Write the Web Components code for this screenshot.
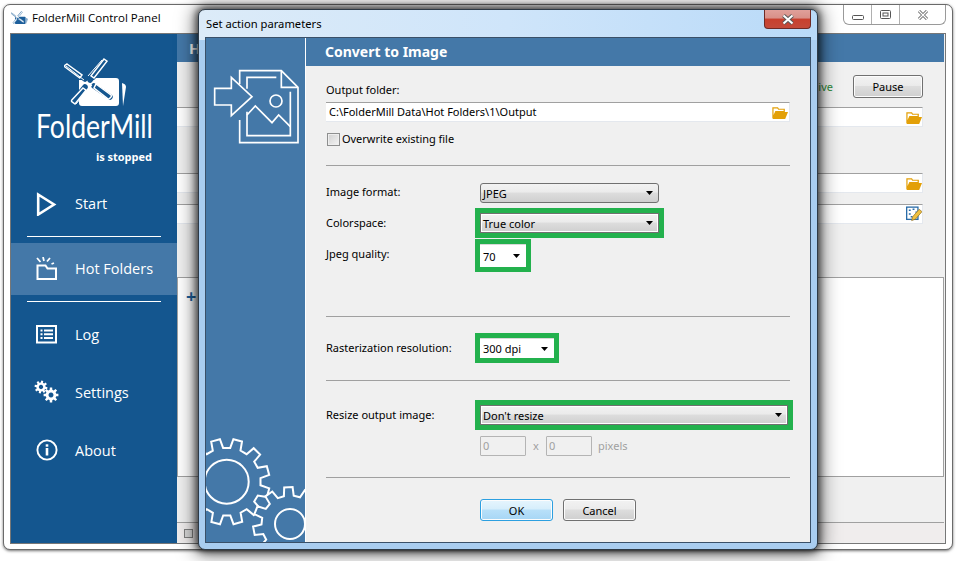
<!DOCTYPE html>
<html>
<head>
<meta charset="utf-8">
<title>FolderMill</title>
<style>
  html, body { margin: 0; padding: 0; background: #fff; overflow: hidden; }
  body { width: 956px; height: 561px; font: 11px "Noto Sans", sans-serif; }
</style>
</head>
<body>
<fm-desktop>
  <fm-window caption="FolderMill Control Panel">
    <fm-sidebar slot="side" state="is stopped">
      <fm-nav-item icon="start">Start</fm-nav-item>
      <fm-nav-rule></fm-nav-rule>
      <fm-nav-item icon="folders" selected>Hot Folders</fm-nav-item>
      <fm-nav-rule></fm-nav-rule>
      <fm-nav-item icon="log">Log</fm-nav-item>
      <fm-nav-item icon="settings">Settings</fm-nav-item>
      <fm-nav-item icon="about">About</fm-nav-item>
    </fm-sidebar>
    <fm-hot-folders></fm-hot-folders>
  </fm-window>
  <fm-dialog caption="Set action parameters" heading="Convert to Image">
    <fm-label style="margin-top:17px">Output folder:</fm-label>
    <fm-path value="C:\FolderMill Data\Hot Folders\1\Output" style="margin-top:5px"></fm-path>
    <fm-check style="margin-top:10px">Overwrite existing file</fm-check>
    <fm-rule style="margin-top:19px"></fm-rule>
    <fm-row label="Image format:" style="margin-top:17px;--label-lift:2px"><fm-combo value="JPEG" width="179"></fm-combo></fm-row>
    <fm-row label="Colorspace:" style="margin-top:10px"><fm-combo value="True color" width="179" mark></fm-combo></fm-row>
    <fm-row label="Jpeg quality:" style="margin-top:11px;--label-lift:3px"><fm-combo value="70" width="46" height="23" flat mark></fm-combo></fm-row>
    <fm-rule style="margin-top:49px"></fm-rule>
    <fm-row label="Rasterization resolution:" style="margin-top:21px"><fm-combo value="300 dpi" width="74" flat mark></fm-combo></fm-row>
    <fm-rule style="margin-top:22px"></fm-rule>
    <fm-row label="Resize output image:" style="margin-top:24px"><fm-combo value="Don't resize" width="308" mark></fm-combo></fm-row>
    <fm-row style="margin-top:11px"><fm-size></fm-size></fm-row>
    <fm-rule style="margin-top:21px"></fm-rule>
    <fm-actions style="margin-top:21px">
      <fm-button primary>OK</fm-button>
      <fm-button>Cancel</fm-button>
    </fm-actions>
  </fm-dialog>
</fm-desktop>

<script>
// builds the outline of a gear, used for the settings icon and the dialog art
function gearPath (cx, cy, rOut, rIn, teeth, start = 0) {
  const step = Math.PI * 2 / teeth
  const pts = []
  for (let i = 0; i < teeth; i++) {
    const a = start + i * step
    const pt = (r, o) => (cx + r * Math.cos(a + o * step)).toFixed(1) + ' ' + (cy + r * Math.sin(a + o * step)).toFixed(1)
    pts.push(pt(rIn, -0.3), pt(rOut, -0.2), pt(rOut, 0.2), pt(rIn, 0.3))
  }
  return 'M' + pts.join('L') + 'Z'
}

const FOLDER_ICON = `<svg width="16" height="13" viewBox="0 0 17 14" preserveAspectRatio="none">
  <path d="M1 13V2h5l1 1.500h6V6H4L1 13z" fill="none" stroke="#e3a008" stroke-width="1.300"/>
  <path d="M0.500 14L3.800 6.500H17L14 14z" fill="#e3a008"/>
</svg>`

const EDIT_ICON = `<svg width="16" height="16" viewBox="0 0 17 16">
  <rect x="0.700" y="0.700" width="12" height="13" fill="#fff" stroke="#2a6ca8" stroke-width="1.400"/>
  <path d="M3 4h2M7 3h2M3 8h2M10 6h2M5 11h2" stroke="#2a6ca8" stroke-width="1.500"/>
  <path d="M6 15l1-4 7-8 3 2.500-7 8z" fill="#f0c040" stroke="#8a6a20" stroke-width="0.700"/>
</svg>`

// windmill over a folder; --halo is the colour of the gaps around the blades
const LOGO_MARK = `
  <path d="M79 80h15l2 -2h20q3 0 3 3v22q0 3 -3 3H82q-3 0 -3 -3z" fill="currentColor"/>
  <path d="M122 83q4 1 4 4l-3 19z" fill="currentColor"/>
  <g fill="none" stroke="var(--halo,#14568f)" stroke-linecap="round">
    <path d="M105 61L90 80M85 87L73 102" stroke-width="5.500"/>
    <path d="M67 66L85 79M94 86L110 97" stroke-width="5.500"/>
  </g>
  <g fill="var(--halo,#14568f)" stroke="currentColor" stroke-width="1.500" stroke-linecap="round">
    <path d="M104 59l3 2.200L94 78l-3 -2.200z"/>
    <path d="M83 88l3 2.200L75 104l-3.200 -2.300q-.8 -.8 0 -1.700z"/>
    <path d="M67 64l15 11-2.200 3L65 67q-.8 -.8 0 -1.800z"/>
    <path d="M96 84l15 11q1 1 0 2l-1.500 1.500q-1 1 -2 0L94 88z"/>
  </g>
  <path d="M88 76L102 60M92 85L76 104M66 66L84 80" fill="none" stroke="currentColor" stroke-width="1"/>`

class FmDesktop extends HTMLElement {
  constructor () {
    super()
    this.attachShadow({ mode: 'open' }).innerHTML = `
      <style>
      :host{
        display:block;
        position:relative;
        width:956px;
        height:561px;
        overflow:hidden;
        background:#fff;
      }
      </style>
      <slot></slot>`
  }
}

class FmWindow extends HTMLElement {
  constructor () {
    super()
    this.attachShadow({ mode: 'open' }).innerHTML = `
      <style>
      :host{
        position:absolute;
        left:3px;
        top:4px;
        width:950px;
        height:546px;
        box-sizing:border-box;
        display:flex;
        flex-direction:column;
        background:#fff;
        border:1px solid #6a6a6a;
        border-radius:7px;
        box-shadow:0 1px 3px rgba(0,0,0,.55);
        padding:0 6px 5px 6px;
      }
      #bar{
        height:28px;
        display:flex;
        align-items:flex-start;
        flex:none;
      }
      #logo{
        margin:5px 4px 0 1px;
        color:#1d5f9b;
        --halo:#fff;
      }
      #title{
        font:11.500px/1 "Open Sans", sans-serif;
        color:#000;
        margin-top:7px;
      }
      #buttons{
        margin-left:auto;
        display:flex;
        height:19px;
        border:1px solid #9a9a9a;
        border-top:none;
        border-radius:0 0 6px 6px;
        margin-right:0;
      }
      #buttons > div{
        display:flex;
        align-items:center;
        justify-content:center;
        border-left:1px solid #b0b0b0;
      }
      #buttons > div:first-child{ border-left:none; }
      #client{
        flex:1;
        display:flex;
        border:1px solid #777;
        min-height:0;
        background:#f0f0f0;
      }
      #client ::slotted(fm-sidebar){ flex:none; }
      </style>
      <div id="bar">
        <svg id="logo" width="17" height="16" viewBox="64 58 64 50">${LOGO_MARK}</svg>
        <div id="title"></div>
        <div id="buttons">
          <div style="width:27px;padding-top:6px;box-sizing:border-box"><svg width="12" height="5"><rect x=".5" y=".5" width="11" height="4" rx="1" fill="#fff" stroke="#555"/></svg></div>
          <div style="width:27px"><svg width="12" height="10"><rect x=".5" y=".5" width="10" height="8" rx="1" fill="#fff" stroke="#555"/><rect x="3" y="3" width="5" height="3" fill="none" stroke="#555"/></svg></div>
          <div style="width:45px"><svg width="12" height="10" viewBox="0 0 12 10"><path d="M2 1l8 8M10 1L2 9" stroke="#666" stroke-width="3"/><path d="M2 1l8 8M10 1L2 9" stroke="#fff" stroke-width="1.200"/></svg></div>
        </div>
      </div>
      <div id="client">
        <slot name="side"></slot>
        <slot></slot>
      </div>`
    this.shadowRoot.querySelector('#title').textContent = this.getAttribute('caption')
  }
}

class FmSidebar extends HTMLElement {
  constructor () {
    super()
    this.attachShadow({ mode: 'open' }).innerHTML = `
      <style>
      :host{
        display:flex;
        flex-direction:column;
        width:166px;
        background:#14568f;
        color:#fff;
        font-family:"Open Sans", sans-serif;
      }
      #brand{
        height:141px;
        box-sizing:border-box;
        padding:24px 0 0 25px;
      }
      #mark{
        display:block;
        margin-left:28px;
        color:#fff;
      }
      #name{
        font:400 32px/32px Lato, sans-serif;
        transform:scaleX(.83);
        transform-origin:left top;
        white-space:nowrap;
        margin-top:2px;
      }
      #state{
        font:700 11px/14px "Open Sans", sans-serif;
        text-align:right;
        padding-right:25px;
        margin-top:8px;
      }
      </style>
      <div id="brand">
        <svg id="mark" width="64" height="50" viewBox="64 58 64 50">${LOGO_MARK}</svg>
        <div id="name">FolderMill</div>
        <div id="state"></div>
      </div>
      <slot></slot>`
    this.shadowRoot.querySelector('#state').textContent = this.getAttribute('state')
  }
}

const NAV_ICONS = {
  start: `<svg width="22" height="24" viewBox="0 0 22 24"><path d="M2.200 2.500L18 12.500 2.200 22.500z" fill="none" stroke="#fff" stroke-width="2.600"/></svg>`,
  folders: `<svg width="22" height="24" viewBox="0 0 22 24"><path d="M1.500 8.500h8l2 3h8.500v10.500H1.500z" fill="none" stroke="#fff" stroke-width="2"/><path d="M1 1l3.500 4M7 0l1 4M14 1l-3 3.500M18 6l-2.500 1" stroke="#fff" stroke-width="1.800"/></svg>`,
  log: `<svg width="22" height="20" viewBox="0 0 22 20"><rect x="1" y="1" width="19" height="16.500" fill="none" stroke="#fff" stroke-width="2"/><path d="M4.500 5.500h2M8 5.500h9M4.500 9.300h2M8 9.300h9M4.500 13h2M8 13h9" stroke="#fff" stroke-width="2"/></svg>`,
  settings: `<svg width="26" height="26" viewBox="0 0 26 26"><path fill-rule="evenodd" fill="#fff" d="${gearPath(8, 8, 6.500, 4.600, 8, 0.2)}M8 5.800a2.200 2.200 0 1 0 .01 0z"/><path fill-rule="evenodd" fill="#fff" d="${gearPath(18, 16, 7.500, 5.400, 8)}M18 13.500a2.500 2.500 0 1 0 .01 0z"/></svg>`,
  about: `<svg width="22" height="22" viewBox="0 0 22 22"><circle cx="11" cy="11" r="9.600" fill="none" stroke="#fff" stroke-width="1.900"/><rect x="9.700" y="9" width="2.600" height="7.500" fill="#fff"/><rect x="9.700" y="5.300" width="2.600" height="2.400" fill="#fff"/></svg>`
}

class FmNavItem extends HTMLElement {
  constructor () {
    super()
    this.attachShadow({ mode: 'open' }).innerHTML = `
      <style>
      :host{
        display:flex;
        align-items:center;
        height:58px;
        color:#fff;
        font:14.500px "Open Sans", sans-serif;
      }
      :host([selected]){
        height:52px;
        background:#4478a8;
      }
      #icon{
        width:39px;
        margin-left:25px;
        display:flex;
        align-items:center;
      }
      :host([icon="settings"]) #icon,
      :host([icon="about"]) #icon{ margin-bottom:2px; }
      :host([icon="settings"]) svg{ margin-left:-3px; }
      #text{ margin-bottom:1px; }
      </style>
      <div id="icon">${NAV_ICONS[this.getAttribute('icon')]}</div>
      <span id="text"><slot></slot></span>`
  }
}

class FmNavRule extends HTMLElement {
  constructor () {
    super()
    this.attachShadow({ mode: 'open' }).innerHTML = `
      <style>
      :host{
        display:block;
        height:1px;
        margin:3px 16px 6px 16px;
        background:#fff;
      }
      :host(:last-of-type){ margin:6px 16px 4px 16px; }
      </style>`
  }
}

class FmHotFolders extends HTMLElement {
  constructor () {
    super()
    this.attachShadow({ mode: 'open' }).innerHTML = `
      <style>
      :host{
        flex:1;
        min-width:0;
        display:flex;
        flex-direction:column;
        background:#f0f0f0;
        font:11px "Noto Sans", sans-serif;
      }
      header{
        height:28px;
        flex:none;
        background:#4478a8;
        color:#fff;
        font:700 15px/28px "Open Sans", sans-serif;
        padding-left:12px;
        margin-right:1px;
      }
      #tools{
        display:flex;
        justify-content:flex-end;
        align-items:center;
        gap:20px;
        margin:13px 22px 0 0;
      }
      #status{
        color:#2e8b3a;
      }
      .field{
        height:20px;
        box-sizing:border-box;
        margin-right:22px;
        background:#fff;
        border-top:1px solid #a0a0a0;
        border-right:1px solid #e4e8ee;
        border-bottom:1px solid #e4e8ee;
        display:flex;
        align-items:center;
        justify-content:flex-end;
      }
      #list{
        height:200px;
        box-sizing:border-box;
        margin:53px 1px 0 0;
        background:#fff;
        border:1px solid #a0a0a0;
        color:#1d5f9b;
        font:700 18px/1 "Open Sans", sans-serif;
        padding:9px 0 0 8px;
      }
      #statusbar{
        height:20px;
        box-sizing:border-box;
        margin:45px 1px 0 0;
        background:#f0eded;
        border-top:1px solid #a0a0a0;
        padding:6px 0 0 7px;
      }
      #statusbar i{
        display:block;
        width:7px;
        height:7px;
        background:#d8d8d8;
        border:1px solid #808080;
      }
      </style>
      <header>H</header>
      <div id="tools"><span id="status">ive</span><fm-button>Pause</fm-button></div>
      <div class="field" style="margin-top:9px">${FOLDER_ICON}</div>
      <div class="field" style="margin-top:46px">${FOLDER_ICON}</div>
      <div class="field" style="margin-top:11px">${EDIT_ICON}</div>
      <div id="list">+</div>
      <div id="statusbar"><i></i></div>`
  }
}

class FmDialog extends HTMLElement {
  constructor () {
    super()
    this.attachShadow({ mode: 'open' }).innerHTML = `
      <style>
      :host{
        position:absolute;
        left:198px;
        top:9px;
        width:620px;
        height:541px;
        box-sizing:border-box;
        display:flex;
        flex-direction:column;
        padding:0 6px 6px 6px;
        border:1px solid #2e3a46;
        border-radius:7px;
        background:linear-gradient(90deg,#dcebf8 0%,#cfe5fa 50%,#b9daf8 100%);
        background-size:100% 30px;
        background-repeat:no-repeat;
        background-color:#a9cdf0;
        box-shadow:0 0 7px 2px rgba(0,0,0,.6), 0 1px 18px 4px rgba(0,0,0,.5);
      }
      #bar{
        height:27px;
        flex:none;
        display:flex;
        align-items:flex-start;
      }
      #title{
        font:11.200px/1 "Noto Sans", sans-serif;
        color:#000;
        margin:8px 0 0 1px;
      }
      #close{
        margin-left:auto;
        width:47px;
        height:19px;
        box-sizing:border-box;
        border:1px solid #6e2a26;
        border-top:none;
        border-radius:0 0 4px 4px;
        background:linear-gradient(#e0a09a,#d89088 45%,#c8402e 50%,#c44a3a);
        display:flex;
        align-items:center;
        justify-content:center;
      }
      #client{
        flex:1;
        min-height:0;
        display:flex;
        border:1px solid #3a5068;
        background:#f0f0f0;
      }
      #art{
        width:99px;
        flex:none;
        border-right:1px solid #fff;
        background:#4478a8;
        display:flex;
        flex-direction:column;
        overflow:hidden;
      }
      #art svg{ display:block; flex:none; }
      #page{ margin-top:12px; }
      #gears{ margin-top:auto; }
      #main{
        flex:1;
        min-width:0;
        display:flex;
        flex-direction:column;
      }
      h1{
        margin:0;
        height:28px;
        flex:none;
        background:#4478a8;
        color:#fff;
        font:700 14px/28px "Noto Sans", sans-serif;
        padding-left:19px;
      }
      #body{
        flex:1;
        padding:0 20px;
        display:flex;
        flex-direction:column;
      }
      </style>
      <div id="bar">
        <div id="title"></div>
        <div id="close"><svg width="14" height="11" viewBox="0 0 14 11"><path d="M2.500 1.500l9 8M11.500 1.500l-9 8" stroke="#5a5a5a" stroke-width="4"/><path d="M2.500 1.500l9 8M11.500 1.500l-9 8" stroke="#fff" stroke-width="2"/></svg></div>
      </div>
      <div id="client">
        <div id="art">
          <svg id="page" width="99" height="150" viewBox="0 0 297 450" fill="none" stroke="#fff" stroke-width="5">
            <path d="M101 102V101L101 95M101 210V278H276V112L226 62H101V95"/>
            <path d="M226 62V112H276"/>
            <path d="M123 116V82H211M253 125V257H123V185"/>
            <path d="M26 115H76V82L138 140L76 197V165H26z"/>
            <circle cx="210" cy="153" r="18"/>
            <path d="M123 195L148 168L198 218L218 195L253 230"/>
          </svg>
          <svg id="gears" width="99" height="106" viewBox="206 436 99 106" fill="none" stroke="#fff" stroke-width="2">
            <path d="${gearPath(226.700, 481.700, 43, 34, 12, 0.26)}"/>
            <circle cx="226.700" cy="481.700" r="22"/>
            <path d="${gearPath(290, 524, 37, 28.500, 11, 0.1)}" fill="#4478a8"/>
            <circle cx="290" cy="524" r="15"/>
          </svg>
        </div>
        <div id="main">
          <h1></h1>
          <div id="body"><slot></slot></div>
        </div>
      </div>`
    this.shadowRoot.querySelector('#title').textContent = this.getAttribute('caption')
    this.shadowRoot.querySelector('h1').textContent = this.getAttribute('heading')
  }
}

class FmLabel extends HTMLElement {
  constructor () {
    super()
    this.attachShadow({ mode: 'open' }).innerHTML = `
      <style>
      :host{
        display:block;
        font:11px/14px "Noto Sans", sans-serif;
        color:#000;
      }
      </style>
      <slot></slot>`
  }
}

class FmPath extends HTMLElement {
  constructor () {
    super()
    this.attachShadow({ mode: 'open' }).innerHTML = `
      <style>
      :host{
        display:flex;
        align-items:center;
        height:20px;
        box-sizing:border-box;
        background:#fff;
        border-top:1px solid #a0a0a0;
        border-right:1px solid #e4e8ee;
        border-bottom:1px solid #e4e8ee;
        font:11px "Noto Sans", sans-serif;
        padding:0 1px 0 3px;
      }
      #val{ flex:1; margin-bottom:2px; }
      </style>
      <span id="val"></span>${FOLDER_ICON}`
    this.shadowRoot.querySelector('#val').textContent = this.getAttribute('value')
  }
}

class FmCheck extends HTMLElement {
  constructor () {
    super()
    this.attachShadow({ mode: 'open' }).innerHTML = `
      <style>
      :host{
        display:flex;
        align-items:center;
        gap:2px;
        height:14px;
        font:11px/14px "Noto Sans", sans-serif;
        letter-spacing:-.03px;
      }
      i{
        width:11px;
        height:11px;
        margin-left:1px;
        border:1px solid #8e8f8f;
        background:linear-gradient(135deg,#d0d0d0,#f4f4f4);
        box-shadow:inset 0 0 0 1px #eee;
      }
      </style>
      <i></i><slot></slot>`
  }
}

class FmRule extends HTMLElement {
  constructor () {
    super()
    this.attachShadow({ mode: 'open' }).innerHTML = `
      <style>
      :host{
        display:block;
        height:1px;
        background:#a0a0a0;
        flex:none;
      }
      </style>`
  }
}

class FmRow extends HTMLElement {
  constructor () {
    super()
    this.attachShadow({ mode: 'open' }).innerHTML = `
      <style>
      :host{
        display:grid;
        grid-template-columns:154px 1fr;
        align-items:center;
        font:11px/14px "Noto Sans", sans-serif;
      }
      #label{ margin-bottom:var(--label-lift, 0); }
      </style>
      <div id="label"></div>
      <div><slot></slot></div>`
    this.shadowRoot.querySelector('#label').textContent = this.getAttribute('label') || ''
  }
}

class FmCombo extends HTMLElement {
  constructor () {
    super()
    const width = this.getAttribute('width')
    const height = this.getAttribute('height') || 20
    this.attachShadow({ mode: 'open' }).innerHTML = `
      <style>
      :host{
        display:flex;
        align-items:center;
        box-sizing:border-box;
        width:${width}px;
        height:${height}px;
        border:1px solid #707070;
        border-radius:3px;
        background:linear-gradient(#f2f2f2,#ebebeb 45%,#ddd 50%,#cfcfcf);
        font:11px "Noto Sans", sans-serif;
        padding:0 5px 0 2px;
      }
      :host([flat]){
        background:#fff;
        border:none;
        border-top:1px solid #d8d8d8;
        padding:0 6px 0 3px;
      }
      :host([mark]){
        border-radius:0;
        outline:5px solid #23b14d;
        box-shadow:inset 0 0 0 1px #fff;
      }
      #val{ flex:1; white-space:nowrap; }
      </style>
      <span id="val"></span>
      <svg width="7" height="4"><path d="M0 0h7L3.500 4z" fill="#000"/></svg>`
    this.shadowRoot.querySelector('#val').textContent = this.getAttribute('value')
  }
}

class FmSize extends HTMLElement {
  constructor () {
    super()
    this.attachShadow({ mode: 'open' }).innerHTML = `
      <style>
      :host{
        display:flex;
        align-items:center;
        color:#a0a0a0;
        font:11px/14px "Noto Sans", sans-serif;
      }
      .box{
        width:46px;
        height:20px;
        box-sizing:border-box;
        border:1px solid #b4b4b4;
        border-radius:1px;
        background:#f0f0f0;
        line-height:18px;
        padding-left:2px;
      }
      .x{ width:20px; text-align:center; }
      .unit{ margin-left:6px; }
      </style>
      <div class="box">0</div><div class="x">x</div><div class="box">0</div><div class="unit">pixels</div>`
  }
}

class FmActions extends HTMLElement {
  constructor () {
    super()
    this.attachShadow({ mode: 'open' }).innerHTML = `
      <style>
      :host{
        display:flex;
        gap:10px;
        padding-left:154px;
      }
      </style>
      <slot></slot>`
  }
}

class FmButton extends HTMLElement {
  constructor () {
    super()
    this.attachShadow({ mode: 'open' }).innerHTML = `
      <style>
      :host{
        display:flex;
        align-items:center;
        justify-content:center;
        width:70px;
        height:23px;
        box-sizing:border-box;
        border:1px solid #707070;
        border-radius:3px;
        background:linear-gradient(#f2f2f2,#ebebeb 45%,#ddd 50%,#cfcfcf);
        box-shadow:inset 0 0 0 1px #fcfcfc;
        font:11px "Noto Sans", sans-serif;
        color:#000;
      }
      :host-context(fm-actions){ width:73px; height:22px; }
      :host([primary]){
        border-color:#2c9fe0;
        background:linear-gradient(#e6f5fd,#d6eefb 45%,#b8e0f9 50%,#a6d6f5);
      }
      </style>
      <slot></slot>`
  }
}

// Register
customElements.define('fm-desktop', FmDesktop)
customElements.define('fm-window', FmWindow)
customElements.define('fm-sidebar', FmSidebar)
customElements.define('fm-nav-item', FmNavItem)
customElements.define('fm-nav-rule', FmNavRule)
customElements.define('fm-hot-folders', FmHotFolders)
customElements.define('fm-dialog', FmDialog)
customElements.define('fm-label', FmLabel)
customElements.define('fm-path', FmPath)
customElements.define('fm-check', FmCheck)
customElements.define('fm-rule', FmRule)
customElements.define('fm-row', FmRow)
customElements.define('fm-combo', FmCombo)
customElements.define('fm-size', FmSize)
customElements.define('fm-actions', FmActions)
customElements.define('fm-button', FmButton)
</script>
</body>
</html>
